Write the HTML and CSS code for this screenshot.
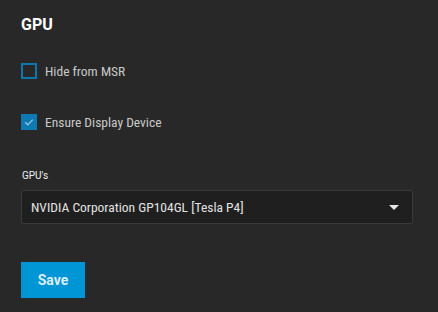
FILE: index.html
```html
<!DOCTYPE html>
<html>
<head>
<meta charset="utf-8">
<link rel="stylesheet" href="styles.css">
</head>
<body>
<div class="panel">
  <h2 class="title">GPU</h2>
  <label class="check">
    <span class="box"></span>
    <span class="check-label">Hide from MSR</span>
  </label>
  <label class="check">
    <span class="box checked">
      <svg viewBox="0 0 16 16" width="16" height="16"><path d="M4.2 8.3 L6.8 10.8 L11.8 5.6" fill="none" stroke="#8fc3df" stroke-width="1.3"/></svg>
    </span>
    <span class="check-label">Ensure Display Device</span>
  </label>
  <div class="field">
    <div class="field-label">GPU's</div>
    <div class="select">
      <span class="select-value">NVIDIA Corporation GP104GL [Tesla P4]</span>
      <span class="arrow"></span>
    </div>
  </div>
  <button class="save">Save</button>
</div>
</body>
</html>
```
FILE: styles.css
```css
html, body {
  margin: 0;
  padding: 0;
  background: #282828;
  font-family: Roboto, "Liberation Sans", sans-serif;
}
.panel {
  padding: 16px 25px 0 21px;
  display: flex;
  flex-direction: column;
  align-items: flex-start;
}
.title {
  margin: 0;
  font-size: 16px;
  font-weight: 700;
  color: #ffffff;
  line-height: 18px;
}
.check {
  display: flex;
  align-items: center;
  gap: 8px;
  height: 16px;
}
.check:nth-of-type(1) { margin-top: 29px; }
.check:nth-of-type(2) { margin-top: 35px; }
.box {
  width: 16px;
  height: 16px;
  box-sizing: border-box;
  border: 2px solid #0e76ad;
  display: flex;
  align-items: center;
  justify-content: center;
}
.box.checked {
  background: #0e7ab3;
  border-color: #0e7ab3;
}
.box svg { display: block; flex: none; }
.check-label {
  font-size: 13.5px;
  font-stretch: 80%;
  color: #c8c8c8;
  line-height: 16px;
}
.field {
  margin-top: 40px;
  align-self: stretch;
}
.field-label {
  font-size: 10px;
  color: #f0f0f0;
  line-height: 12px;
  padding-left: 1px;
}
.select {
  margin-top: 8px;
  height: 34px;
  box-sizing: border-box;
  border: 1px solid #3a3a3a;
  border-radius: 2px;
  background: #1f1f1f;
  display: flex;
  align-items: center;
  justify-content: space-between;
  padding: 0 13px 0 9px;
}
.select-value {
  font-size: 13.5px;
  font-stretch: 80%;
  color: #e2e2e2;
}
.arrow {
  width: 0;
  height: 0;
  border-left: 5px solid transparent;
  border-right: 5px solid transparent;
  border-top: 5px solid #e6e6e6;
}
.save {
  margin-top: 38px;
  width: 64px;
  height: 36px;
  border: none;
  background: #0095d5;
  color: #dceef8;
  font-family: Roboto, "Liberation Sans", sans-serif;
  font-size: 14px;
  font-weight: 700;
  padding: 0;
}
```
